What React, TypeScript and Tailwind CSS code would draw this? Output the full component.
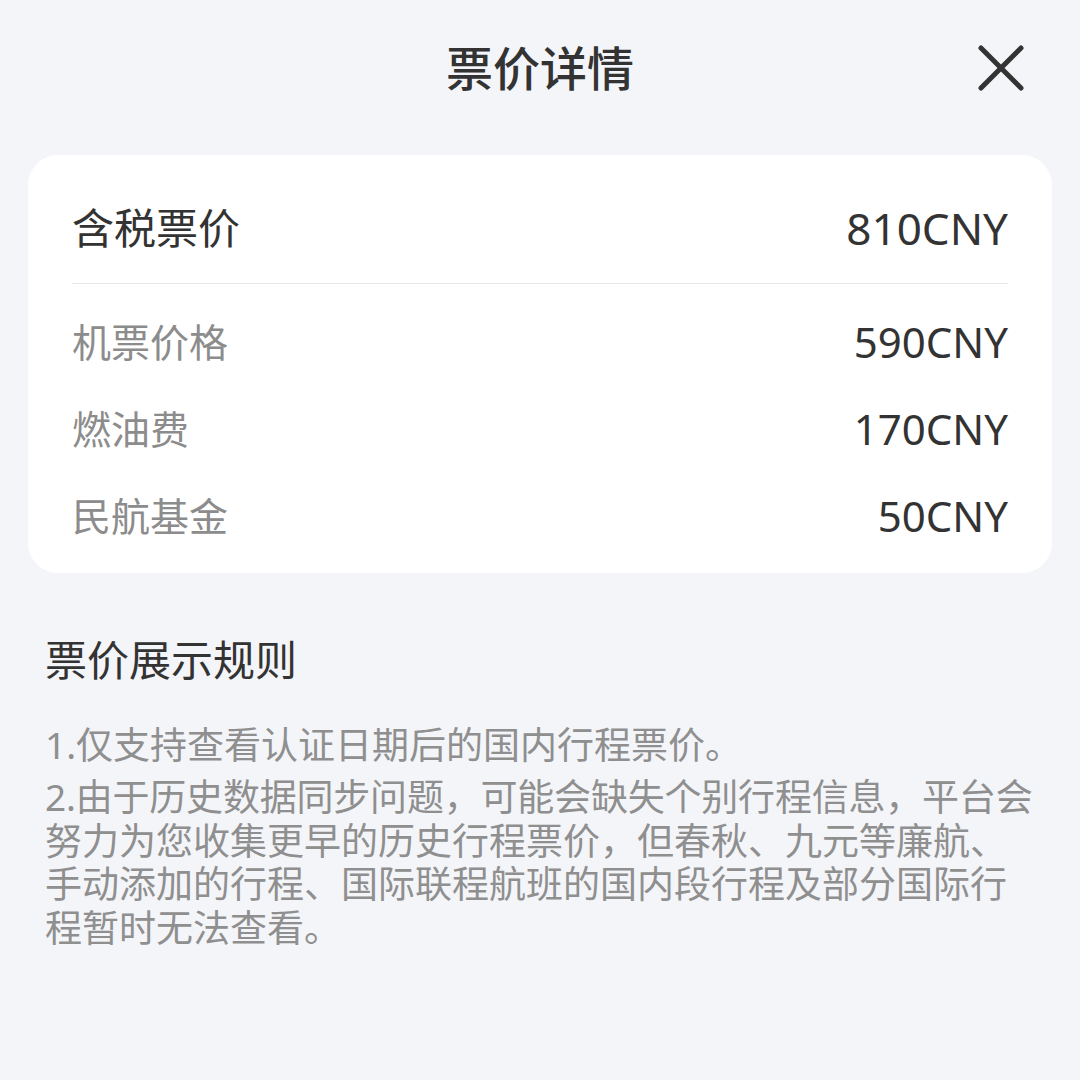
import React from "react";

const font = { fontFamily: '"Noto Sans", "Noto Sans CJK SC", sans-serif' };

const rows = [
  { label: "机票价格", value: "590CNY" },
  { label: "燃油费", value: "170CNY" },
  { label: "民航基金", value: "50CNY" },
];

const ruleLines = [
  "努力为您收集更早的历史行程票价，但春秋、九元等廉航、",
  "手动添加的行程、国际联程航班的国内段行程及部分国际行",
  "程暂时无法查看。",
];

function CloseIcon() {
  return (
    <svg width="46" height="46" viewBox="0 0 46 46" fill="none">
      <path d="M3 3L43 43M43 3L3 43" stroke="#333333" strokeWidth="5" strokeLinecap="round" />
    </svg>
  );
}

export default function App() {
  return (
    <main className="w-[1080px] h-[1080px] bg-[#f4f5f9] overflow-hidden" style={font}>
      {/* Header */}
      <div className="grid grid-cols-[1fr_auto_1fr] items-center h-[136px]">
        <div />
        <h1 className="text-[47px] leading-[56px] font-medium text-[#333333]">票价详情</h1>
        <div className="flex justify-end pr-[56px]">
          <button className="w-[46px] h-[46px] flex items-center justify-center">
            <CloseIcon />
          </button>
        </div>
      </div>

      {/* Price card */}
      <div className="mx-[28px] mt-[19px] bg-white rounded-[30px] px-[44px]">
        <div className="flex items-center justify-between pt-[50px] pb-[32px] border-b border-[#e6e6e6]">
          <span className="text-[42px] leading-[46px] text-[#333333]">含税票价</span>
          <span className="text-[44px] leading-[46px] text-[#333333]">810CNY</span>
        </div>
        <div className="flex flex-col gap-[41px] pt-[35px] pb-[34px]">
          {rows.map((r) => (
            <div key={r.label} className="flex items-center justify-between">
              <span className="text-[39px] leading-[46px] text-[#8c8c8c]">{r.label}</span>
              <span className="text-[42px] leading-[46px] text-[#333333]">{r.value}</span>
            </div>
          ))}
        </div>
      </div>

      {/* Rules */}
      <div className="px-[45px] mt-[62px]">
        <h2 className="text-[42px] leading-[50px] text-[#333333]">票价展示规则</h2>
        <div className="mt-[38px] text-[37px] leading-[43.5px] text-[#8f8f8f] whitespace-nowrap">
          <p>1.仅支持查看认证日期后的国内行程票价。</p>
          <div className="mt-[8.5px]">
            <p className="tracking-[-0.2px]">2.由于历史数据同步问题，可能会缺失个别行程信息，平台会</p>
            {ruleLines.map((l) => (
              <p key={l}>{l}</p>
            ))}
          </div>
        </div>
      </div>
    </main>
  );
}
